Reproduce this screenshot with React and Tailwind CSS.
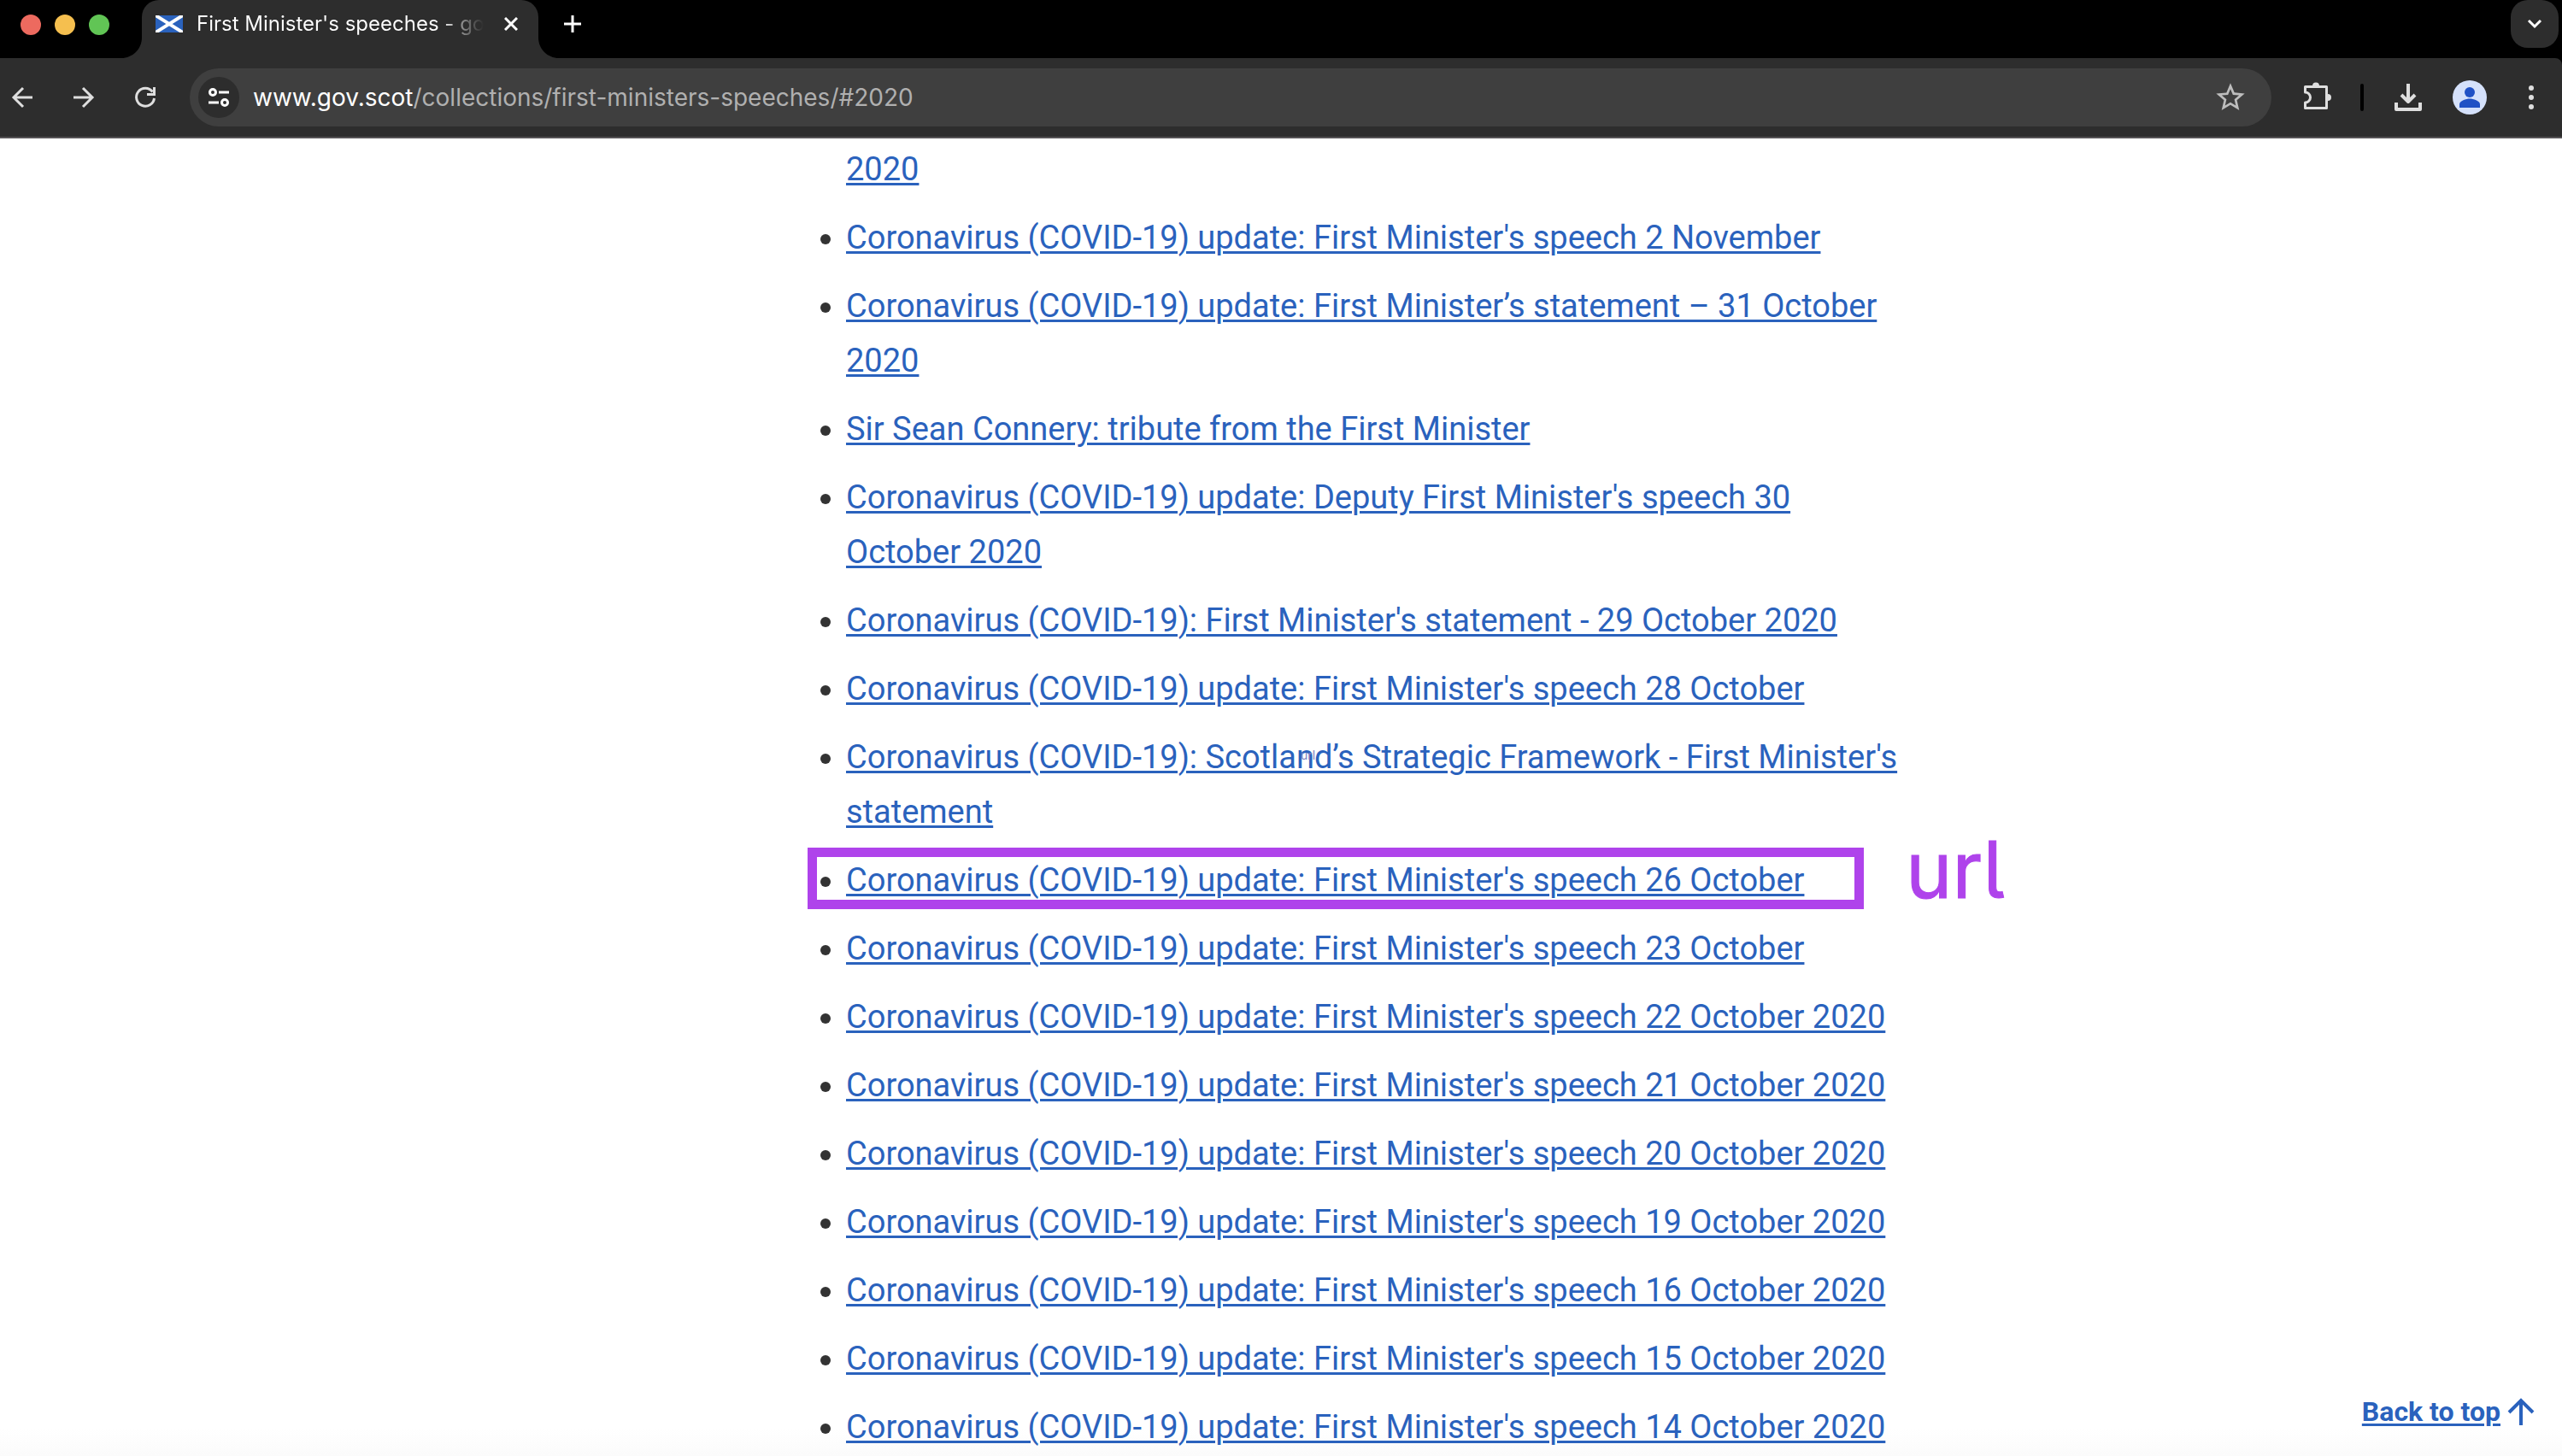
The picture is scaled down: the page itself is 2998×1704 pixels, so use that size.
import React from "react";

const SPEECHES = [
  { title: "2020", continued: true },
  { title: "Coronavirus (COVID-19) update: First Minister's speech 2 November" },
  { title: "Coronavirus (COVID-19) update: First Minister’s statement – 31 October 2020" },
  { title: "Sir Sean Connery: tribute from the First Minister" },
  { title: "Coronavirus (COVID-19) update: Deputy First Minister's speech 30 October 2020" },
  { title: "Coronavirus (COVID-19): First Minister's statement - 29 October 2020" },
  { title: "Coronavirus (COVID-19) update: First Minister's speech 28 October" },
  {
    title: "Coronavirus (COVID-19): Scotland’s Strategic Framework - First Minister's statement",
    ghost: true,
  },
  { title: "Coronavirus (COVID-19) update: First Minister's speech 26 October", marked: true },
  { title: "Coronavirus (COVID-19) update: First Minister's speech 23 October" },
  { title: "Coronavirus (COVID-19) update: First Minister's speech 22 October 2020" },
  { title: "Coronavirus (COVID-19) update: First Minister's speech 21 October 2020" },
  { title: "Coronavirus (COVID-19) update: First Minister's speech 20 October 2020" },
  { title: "Coronavirus (COVID-19) update: First Minister's speech 19 October 2020" },
  { title: "Coronavirus (COVID-19) update: First Minister's speech 16 October 2020" },
  { title: "Coronavirus (COVID-19) update: First Minister's speech 15 October 2020" },
  { title: "Coronavirus (COVID-19) update: First Minister's speech 14 October 2020" },
];

function IconButton({ label, className = "", children }) {
  return (
    <button
      type="button"
      aria-label={label}
      className={`flex shrink-0 items-center justify-center ${className}`}
    >
      {children}
    </button>
  );
}

function TabStrip() {
  return (
    <header className="flex h-[68px] items-start bg-black">
      <div className="flex h-[58px] w-[142px] shrink-0 items-center gap-4 pl-6">
        <span className="size-6 rounded-full bg-[#ed6a5f]" />
        <span className="size-6 rounded-full bg-[#f5bf4f]" />
        <span className="size-6 rounded-full bg-[#61c555]" />
      </div>
      <svg className="h-[68px] w-6 shrink-0" viewBox="0 0 24 68" fill="#2d2d2d">
        <path d="M24 44v24H0c13.300 0 24-10.700 24-24z" />
      </svg>
      <div className="flex h-[68px] w-[464px] shrink-0 items-start rounded-t-[20px] bg-[#2d2d2d] pl-4">
        <div className="flex h-14 w-full items-center">
          <svg className="h-5 w-8 shrink-0" viewBox="0 0 32 20">
            <rect width="32" height="20" fill="#2a62bd" />
            <path d="M0 0L32 20M32 0L0 20" stroke="#fff" strokeWidth="4" />
          </svg>
          <span className="ml-4 w-[336px] overflow-hidden whitespace-nowrap bg-linear-to-r from-white from-85% to-[#2d2d2d] to-100% bg-clip-text font-['Inter',sans-serif] text-[24px] leading-8 text-transparent">
            First Minister's speeches - gov.scot
          </span>
          <IconButton label="Close tab" className="ml-4 size-8">
            <svg className="size-4" viewBox="0 0 16 16" stroke="#fff" strokeWidth="3">
              <path d="M1 1l14 14M15 1L1 15" />
            </svg>
          </IconButton>
        </div>
      </div>
      <svg className="h-[68px] w-6 shrink-0" viewBox="0 0 24 68" fill="#2d2d2d">
        <path d="M0 44v24h24C10.700 68 0 57.300 0 44z" />
      </svg>
      <IconButton label="New tab" className="h-14 w-8">
        <svg className="size-5" viewBox="0 0 20 20" stroke="#fff" strokeWidth="3">
          <path d="M10 0v20M0 10h20" />
        </svg>
      </IconButton>
      <IconButton label="Search tabs" className="mr-1 ml-auto size-14 rounded-[20px] bg-[#2d2d2d]">
        <svg className="size-5" viewBox="0 0 20 20" fill="none" stroke="#fff" strokeWidth="3">
          <path d="M3 6l7 7 7-7" />
        </svg>
      </IconButton>
    </header>
  );
}

function Toolbar() {
  return (
    <div className="bg-black">
      <div className="flex h-[94px] items-center rounded-tr-lg border-b-2 border-[#555355] bg-[#2d2d2d] pr-4">
        <IconButton label="Back" className="ml-2 size-9">
          <svg className="size-7" viewBox="0 0 28 28" fill="none" stroke="#dedede" strokeWidth="3">
            <path d="M26 14H4M15 3L4 14l11 11" />
          </svg>
        </IconButton>
        <IconButton label="Forward" className="ml-9 size-9">
          <svg className="size-7" viewBox="0 0 28 28" fill="none" stroke="#dedede" strokeWidth="3">
            <path d="M2 14h22M13 3l11 11-11 11" />
          </svg>
        </IconButton>
        <IconButton label="Reload" className="ml-9 size-9">
          <svg className="size-7" viewBox="0 0 28 28" fill="none" stroke="#dedede" strokeWidth="3">
            <path d="M22.500 7.500A10.500 10.500 0 1 0 24.500 15" />
            <path d="M24.500 2v8.500H16" />
          </svg>
        </IconButton>
        <div className="ml-[34px] flex h-[68px] min-w-0 flex-1 items-center rounded-full bg-[#3f3f3f] pr-7 pl-[10px]">
          <IconButton label="View site information" className="size-12 rounded-full bg-[#2d2d2d]">
            <svg className="size-7" viewBox="0 0 28 28" fill="none" stroke="#fff" strokeWidth="3">
              <circle cx="7" cy="8" r="3.500" />
              <path d="M14 8h12M2 20h12" />
              <circle cx="21" cy="20" r="3.500" />
            </svg>
          </IconButton>
          <a
            href="#2020"
            className="ml-4 flex-1 truncate font-['Inter',sans-serif] text-[28px] leading-9 text-[#b0b0b0]"
          >
            <span className="text-white">www.gov.scot</span>/collections/first-ministers-speeches/#2020
          </a>
          <IconButton label="Bookmark this tab" className="size-10">
            <svg className="size-10" viewBox="0 0 24 24" fill="#bdbdbd">
              <path d="M22 9.240l-7.190-.62L12 2 9.190 8.630 2 9.240l5.460 4.730L5.820 21 12 17.270 18.180 21l-1.630-7.030L22 9.240zM12 15.400l-3.760 2.270 1-4.280-3.320-2.880 4.380-.38L12 6.100l1.710 4.040 4.380.38-3.320 2.880 1 4.280L12 15.400z" />
            </svg>
          </IconButton>
        </div>
        <IconButton label="Extensions" className="ml-[34px] size-10">
          <svg className="size-10" viewBox="0 0 40 40">
            <path
              d="M5.500 7.500h25v25h-25V26a6 6 0 0 0 0-12z"
              fill="none"
              stroke="#dedede"
              strokeWidth="3"
              strokeLinejoin="round"
            />
            <path d="M14 6.500a4 4 0 0 1 8 0zM32 16a4 4 0 0 1 0 8z" fill="#dedede" />
          </svg>
        </IconButton>
        <span className="mr-8 ml-[30px] h-8 w-1 rounded-full bg-black" />
        <IconButton label="Downloads" className="size-10">
          <svg className="size-10" viewBox="0 0 40 40" fill="none" stroke="#dedede" strokeWidth="4">
            <path d="M20 4v20M12 17l8 8 8-8M6 26v8h28v-8" strokeLinejoin="round" />
          </svg>
        </IconButton>
        <IconButton label="Profile" className="ml-8 size-10 rounded-full bg-[#d5e1fb]">
          <svg className="size-10" viewBox="0 0 40 40" fill="#2051c5">
            <circle cx="20" cy="14" r="6" />
            <path d="M8 32v-4c0-4 8-6.500 12-6.500s12 2.500 12 6.500v4z" />
          </svg>
        </IconButton>
        <IconButton label="Menu" className="ml-8 size-10">
          <svg className="size-10" viewBox="0 0 40 40" fill="#dedede">
            <circle cx="20" cy="9" r="3" />
            <circle cx="20" cy="20" r="3" />
            <circle cx="20" cy="31" r="3" />
          </svg>
        </IconButton>
      </div>
    </div>
  );
}

function SpeechItem({ title, continued, ghost, marked }) {
  return (
    <li className="relative">
      {!continued && <span className="absolute top-7 -left-[30px] size-3 rounded-full bg-[#333333]" />}
      <a
        href="#2020"
        className="text-[#2a62bd] underline decoration-[3px] underline-offset-[3px]"
      >
        {title}
      </a>
      {ghost && (
        <span className="absolute top-5 left-[532px] font-['Inter',sans-serif] text-[14px] leading-5 text-[#7d7fc0]">
          url
        </span>
      )}
      {marked && (
        <>
          <span className="pointer-events-none absolute -top-[6px] -left-[45px] h-[72px] w-[1236px] border-[11px] border-[#af43eb]" />
          <span className="absolute -top-7 left-[1240px] font-['Inter',sans-serif] text-[92px] leading-[96px] text-[#af43eb] [font-feature-settings:'cv05'] [stroke-linejoin:round] [-webkit-text-stroke:1px_#af43eb]">
            url
          </span>
        </>
      )}
    </li>
  );
}

export default function App() {
  return (
    <div className="flex h-screen flex-col overflow-hidden bg-white">
      <TabStrip />
      <Toolbar />
      <main className="relative min-h-0 flex-1 bg-linear-to-t from-[#fbfbfb] to-white to-[32px] font-['Roboto',sans-serif]">
        <div className="grid h-full grid-cols-[990fr_1240fr_768fr] overflow-hidden pt-1">
          <ul className="col-start-2 space-y-4 text-[38px] leading-[64px]">
            {SPEECHES.map((speech) => (
              <SpeechItem key={speech.title} {...speech} />
            ))}
          </ul>
        </div>
        <a
          href="#top"
          className="absolute right-8 bottom-8 flex items-center gap-2 text-[32px] leading-10 font-bold text-[#2a62bd]"
        >
          <span className="underline decoration-[3px] underline-offset-[3px]">Back to top</span>
          <svg className="size-8" viewBox="0 0 32 32" fill="none" stroke="#2a62bd" strokeWidth="4">
            <path d="M16 32V3M2 17L16 3l14 14" />
          </svg>
        </a>
      </main>
    </div>
  );
}
